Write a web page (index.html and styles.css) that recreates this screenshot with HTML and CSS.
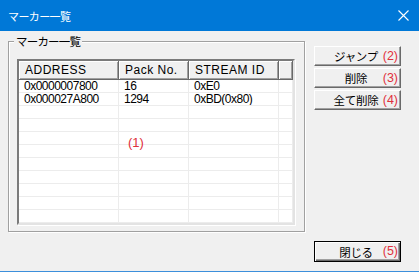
FILE: index.html
```html
<!DOCTYPE html>
<html lang="ja">
<head>
  <meta charset="UTF-8" />
  <title>マーカー一覧</title>
  <link rel="stylesheet" href="styles.css">
</head>
<body>
  <div class="window">
    <div class="titlebar">
      <span class="title">マーカー一覧</span>
      <svg class="close" width="11" height="11" viewBox="0 0 11 11">
        <path d="M0.5 0.5 L10.5 10.5 M10.5 0.5 L0.5 10.5" stroke="#fff" stroke-width="1.1" fill="none" />
      </svg>
    </div>

    <div class="content">
      <div class="main">
        <div class="group">
          <span class="legend">マーカー一覧</span>
          <div class="list">
            <div class="row head">
              <div class="cell">ADDRESS</div>
              <div class="cell">Pack No.</div>
              <div class="cell">STREAM ID</div>
              <div class="cell"></div>
            </div>
            <div class="row">
              <div class="cell">0x0000007800</div>
              <div class="cell">16</div>
              <div class="cell">0xE0</div>
              <div class="cell"></div>
            </div>
            <div class="row">
              <div class="cell">0x000027A800</div>
              <div class="cell">1294</div>
              <div class="cell">0xBD(0x80)</div>
              <div class="cell"></div>
            </div>
            <div class="row"><div class="cell"></div><div class="cell"></div><div class="cell"></div><div class="cell"></div></div>
            <div class="row"><div class="cell"></div><div class="cell"></div><div class="cell"></div><div class="cell"></div></div>
            <div class="row"><div class="cell"></div><div class="cell"></div><div class="cell"></div><div class="cell"></div></div>
            <div class="row"><div class="cell"></div><div class="cell"></div><div class="cell"></div><div class="cell"></div></div>
            <div class="row"><div class="cell"></div><div class="cell"></div><div class="cell"></div><div class="cell"></div></div>
            <div class="row"><div class="cell"></div><div class="cell"></div><div class="cell"></div><div class="cell"></div></div>
            <div class="row"><div class="cell"></div><div class="cell"></div><div class="cell"></div><div class="cell"></div></div>
            <div class="row"><div class="cell"></div><div class="cell"></div><div class="cell"></div><div class="cell"></div></div>
            <div class="row"><div class="cell"></div><div class="cell"></div><div class="cell"></div><div class="cell"></div></div>
            <span class="mark list-mark">(1)</span>
          </div>
        </div>

        <div class="side">
          <button class="btn">ジャンプ<span class="mark">(2)</span></button>
          <button class="btn">削除<span class="mark">(3)</span></button>
          <button class="btn">全て削除<span class="mark">(4)</span></button>
        </div>
      </div>

      <div class="footer">
        <button class="btn default">閉じる<span class="mark">(5)</span></button>
      </div>
    </div>
  </div>
</body>
</html>
```

FILE: styles.css
```css
body, html {
  margin: 0;
  padding: 0;
  background: #f0f0f0;
  overflow: hidden;
}
.window {
  width: 419px;
  height: 272px;
  box-sizing: border-box;
  border-bottom: 1px solid #3c8fdb;
  background: #f0f0f0;
  font-family: 'Liberation Sans', 'Noto Sans CJK JP', sans-serif;
  font-size: 12px;
  color: #000;
}
.titlebar {
  height: 31px;
  background: #0078d7;
  display: flex;
  align-items: center;
  justify-content: space-between;
  padding: 0 10px 0 8px;
}
.title {
  color: #fff;
  font-family: 'Noto Sans CJK JP', sans-serif;
  font-size: 11px;
  letter-spacing: -0.6px;
}
.close {
  display: block;
}
.content {
  padding-left: 8px;
}
.main {
  display: flex;
  gap: 9px;
}
.group {
  position: relative;
  margin-top: 10px;
  width: 297px;
  height: 191px;
  box-sizing: border-box;
  border: 1px solid #a0a0a0;
  box-shadow: 1px 1px 0 #fff, inset 1px 1px 0 #fff;
  padding: 17px 0 0 8px;
}
.legend {
  position: absolute;
  top: -8px;
  left: 5px;
  padding: 0 2px;
  background: #f0f0f0;
  font-family: 'Noto Sans CJK JP', sans-serif;
  font-size: 11.5px;
  line-height: 15px;
  letter-spacing: -0.8px;
}
.list {
  position: relative;
  width: 278px;
  height: 166px;
  box-sizing: border-box;
  background: #fff;
  border: 2px solid;
  border-color: #7a7a7a #e3e3e3 #e3e3e3 #7a7a7a;
  box-shadow: 1px 1px 0 #fff;
  overflow: hidden;
}
.row {
  display: grid;
  grid-template-columns: 100px 70px 90px 14px;
  height: 13px;
}
.cell {
  box-sizing: border-box;
  border-right: 1px solid #ececec;
  border-bottom: 1px solid #ececec;
  padding-left: 5px;
  line-height: 13px;
  white-space: nowrap;
  overflow: hidden;
  letter-spacing: -0.5px;
}
.row.head {
  height: 19px;
}
.head .cell {
  background: #f0f0f0;
  border-right: 1px solid #696969;
  border-bottom: 1px solid #696969;
  box-shadow: inset 1px 1px 0 #fff, inset -1px -1px 0 #a0a0a0;
  padding-left: 6px;
  line-height: 18px;
  letter-spacing: 0.5px;
}
.mark {
  color: #e0303c;
  font-family: 'Liberation Sans', sans-serif;
  font-size: 13px;
  letter-spacing: 0;
}
.list-mark {
  position: absolute;
  left: 109px;
  top: 74px;
}
.side {
  display: flex;
  flex-direction: column;
  gap: 2px;
  margin-top: 15px;
}
.btn {
  position: relative;
  width: 87px;
  height: 20px;
  padding: 0 3px 0 0;
  margin: 0;
  background: #f0f0f0;
  border: 1px solid;
  border-color: #fff #696969 #696969 #fff;
  box-shadow: inset -1px -1px 0 #a0a0a0;
  font-family: 'Noto Sans CJK JP', sans-serif;
  font-size: 11.5px;
  line-height: 16px;
  letter-spacing: -0.3px;
  color: #000;
  text-align: center;
}
.btn .mark {
  position: absolute;
  right: 2px;
  top: 1px;
  font-size: 12.5px;
  line-height: 16px;
}
.footer {
  display: flex;
  justify-content: flex-end;
  padding-right: 18px;
  margin-top: 9px;
}
.btn.default {
  height: 21px;
  border: 1px solid #000;
  box-shadow: inset 1px 1px 0 #fff, inset -1px -1px 0 #696969, inset -2px -2px 0 #a0a0a0;
}
```
